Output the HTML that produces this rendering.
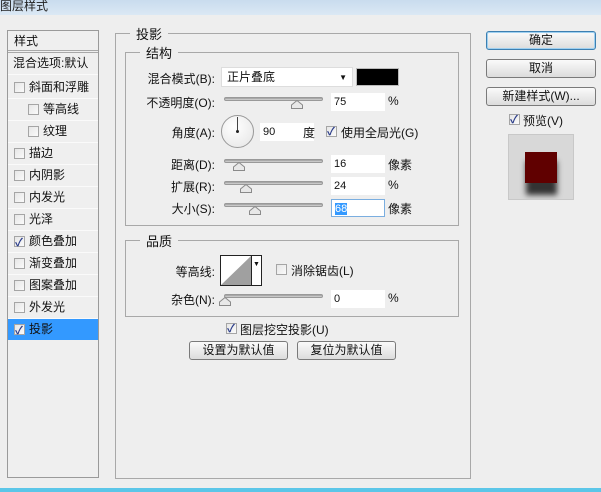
<!DOCTYPE html>
<html><head><meta charset="utf-8"><style>
*{box-sizing:border-box;margin:0;padding:0}
body{width:601px;height:492px;background:#eeeeee;font-family:"Liberation Sans","Noto Sans CJK SC",sans-serif;font-size:12px;color:#111;position:relative;overflow:hidden}
.a{position:absolute;white-space:nowrap}
.title{left:0;top:0;width:601px;height:15px;background:linear-gradient(#c9dcee,#dbe8f4);}
.title span{position:absolute;left:0;top:-3px;font-size:12px;color:#222}
.list{left:7px;top:30px;width:92px;height:448px;border:1px solid #9a9a9a;background:#efefef}
.row{position:absolute;left:0;width:90px;height:22px;border-bottom:1px solid #fafafa;line-height:21px}
.cb{position:absolute;width:11px;height:11px;border:1px solid #a5a5a5;background:linear-gradient(135deg,#e6e6e6,#fafafa);top:5px}
.cb.on::after{content:"✓";position:absolute;left:0;top:-4px;font-size:11px;color:#2a3c8a;font-weight:bold}
.fs{border:1px solid #a8a8a8;}
.lg{background:#eeeeee;padding:0 6px;font-size:13px}
.inp{background:#fff;height:18px;width:54px;padding-left:3px;line-height:18px;font-size:11px}
.track{width:99px;height:4px;border-radius:2px;background:linear-gradient(#9a9a9a,#d8d8d8);border:1px solid #999}
.btn{border:1px solid #7a7a7a;border-radius:3px;background:linear-gradient(#fafafa,#dcdcdc);text-align:center;line-height:16px;font-size:12px}
.lbl{text-align:right;width:100px}
.th{position:absolute;width:12px;height:9px}
</style></head><body>
<div class="a title"><span>图层样式</span></div>

<div class="a list">
 <div class="row" style="top:0;padding-left:6px;border-bottom:3px double #a8a8a8;height:22px">样式</div>
 <div class="row" style="top:22px;padding-left:5px;">混合选项:默认</div>
 <div class="row" style="top:46px"><div class="cb" style="left:6px"></div><span style="position:absolute;left:21px">斜面和浮雕</span></div>
 <div class="row" style="top:68px"><div class="cb" style="left:20px"></div><span style="position:absolute;left:35px">等高线</span></div>
 <div class="row" style="top:90px"><div class="cb" style="left:20px"></div><span style="position:absolute;left:35px">纹理</span></div>
 <div class="row" style="top:112px"><div class="cb" style="left:6px"></div><span style="position:absolute;left:21px">描边</span></div>
 <div class="row" style="top:134px"><div class="cb" style="left:6px"></div><span style="position:absolute;left:21px">内阴影</span></div>
 <div class="row" style="top:156px"><div class="cb" style="left:6px"></div><span style="position:absolute;left:21px">内发光</span></div>
 <div class="row" style="top:178px"><div class="cb" style="left:6px"></div><span style="position:absolute;left:21px">光泽</span></div>
 <div class="row" style="top:200px"><div class="cb on" style="left:6px"></div><span style="position:absolute;left:21px">颜色叠加</span></div>
 <div class="row" style="top:222px"><div class="cb" style="left:6px"></div><span style="position:absolute;left:21px">渐变叠加</span></div>
 <div class="row" style="top:244px"><div class="cb" style="left:6px"></div><span style="position:absolute;left:21px">图案叠加</span></div>
 <div class="row" style="top:266px"><div class="cb" style="left:6px"></div><span style="position:absolute;left:21px">外发光</span></div>
 <div class="row" style="top:288px;background:#3399ff;border:none;height:21px"><div class="cb on" style="left:6px"></div><span style="position:absolute;left:21px">投影</span></div>
</div>

<div class="a fs" style="left:115px;top:33px;width:356px;height:446px"></div>
<div class="a lg" style="left:130px;top:24px">投影</div>
<div class="a fs" style="left:125px;top:52px;width:334px;height:174px"></div>
<div class="a lg" style="left:140px;top:43px">结构</div>

<div class="a lbl" style="left:115px;top:70px">混合模式(B):</div>
<div class="a" style="left:221px;top:67px;width:132px;height:20px;background:#fff;border:1px solid #ddd;padding-left:5px;line-height:19px">正片叠底<span style="position:absolute;right:5px;top:0;font-size:8px">▼</span></div>
<div class="a" style="left:356px;top:68px;width:43px;height:18px;background:#000;border:1px solid #bbb"></div>

<div class="a lbl" style="left:115px;top:94px">不透明度(O):</div>
<div class="a track" style="left:224px;top:97px"></div>
<svg class="th" style="left:291px;top:100px" viewBox="0 0 12 9"><polygon points="6,0.5 11.5,5 11.5,8.5 0.5,8.5 0.5,5" fill="#e8e8e8" stroke="#8a8a8a"/></svg>
<div class="a inp" style="left:331px;top:93px">75</div><div class="a" style="left:388px;top:94px">%</div>

<div class="a lbl" style="left:115px;top:124px">角度(A):</div>
<div class="a" style="left:221px;top:115px;width:33px;height:33px;border-radius:50%;border:1px solid #999;background:radial-gradient(circle at 40% 35%,#fff,#e4e4e4)"></div>
<div class="a" style="left:237px;top:117px;width:1px;height:14px;background:#444"></div>
<div class="a" style="left:236px;top:130px;width:3px;height:3px;background:#222;border-radius:50%"></div>
<div class="a inp" style="left:260px;top:123px">90</div><div class="a" style="left:303px;top:124px">度</div>
<div class="a cb on" style="left:326px;top:126px"></div><div class="a" style="left:341px;top:124px">使用全局光(G)</div>

<div class="a lbl" style="left:115px;top:156px">距离(D):</div>
<div class="a track" style="left:224px;top:159px"></div>
<svg class="th" style="left:233px;top:162px" viewBox="0 0 12 9"><polygon points="6,0.5 11.5,5 11.5,8.5 0.5,8.5 0.5,5" fill="#e8e8e8" stroke="#8a8a8a"/></svg>
<div class="a inp" style="left:331px;top:155px">16</div><div class="a" style="left:388px;top:156px">像素</div>

<div class="a lbl" style="left:115px;top:178px">扩展(R):</div>
<div class="a track" style="left:224px;top:181px"></div>
<svg class="th" style="left:240px;top:184px" viewBox="0 0 12 9"><polygon points="6,0.5 11.5,5 11.5,8.5 0.5,8.5 0.5,5" fill="#e8e8e8" stroke="#8a8a8a"/></svg>
<div class="a inp" style="left:331px;top:177px">24</div><div class="a" style="left:388px;top:178px">%</div>

<div class="a lbl" style="left:115px;top:200px">大小(S):</div>
<div class="a track" style="left:224px;top:203px"></div>
<svg class="th" style="left:249px;top:206px" viewBox="0 0 12 9"><polygon points="6,0.5 11.5,5 11.5,8.5 0.5,8.5 0.5,5" fill="#e8e8e8" stroke="#8a8a8a"/></svg>
<div class="a inp" style="left:331px;top:199px;border:1px solid #7aaee0"><span style="background:#3399ff;color:#fff">68</span></div><div class="a" style="left:388px;top:200px">像素</div>

<div class="a fs" style="left:125px;top:240px;width:334px;height:77px"></div>
<div class="a lg" style="left:140px;top:231px">品质</div>
<div class="a lbl" style="left:115px;top:263px">等高线:</div>
<div class="a" style="left:220px;top:255px;width:42px;height:31px;border:1px solid #222;background:#fff">
 <svg width="30" height="29" style="position:absolute;left:0;top:0"><polygon points="0,29 30,0 30,29" fill="#a0a0a0"/></svg>
 <div style="position:absolute;left:30px;top:0;width:1px;height:29px;background:#222"></div>
 <span style="position:absolute;left:32px;top:5px;font-size:7px">▼</span>
</div>
<div class="a cb" style="left:276px;top:264px"></div><div class="a" style="left:291px;top:262px">消除锯齿(L)</div>

<div class="a lbl" style="left:115px;top:291px">杂色(N):</div>
<div class="a track" style="left:224px;top:294px"></div>
<svg class="th" style="left:219px;top:297px" viewBox="0 0 12 9"><polygon points="6,0.5 11.5,5 11.5,8.5 0.5,8.5 0.5,5" fill="#e8e8e8" stroke="#8a8a8a"/></svg>
<div class="a inp" style="left:331px;top:290px">0</div><div class="a" style="left:388px;top:291px">%</div>

<div class="a cb on" style="left:226px;top:323px"></div><div class="a" style="left:240px;top:321px">图层挖空投影(U)</div>
<div class="a btn" style="left:189px;top:341px;width:99px;height:19px">设置为默认值</div>
<div class="a btn" style="left:297px;top:341px;width:99px;height:19px">复位为默认值</div>

<div class="a btn" style="left:486px;top:31px;width:110px;height:19px;border-color:#3c7fb1;box-shadow:0 0 0 1px #9fd0f0 inset">确定</div>
<div class="a btn" style="left:486px;top:59px;width:110px;height:19px">取消</div>
<div class="a btn" style="left:486px;top:87px;width:110px;height:19px">新建样式(W)...</div>
<div class="a cb on" style="left:509px;top:114px"></div><div class="a" style="left:523px;top:112px">预览(V)</div>
<div class="a" style="left:508px;top:134px;width:66px;height:66px;background:#d8d8d8;border:1px solid #c8c8c8;overflow:hidden">
 <div style="position:absolute;left:17px;top:26px;width:31px;height:34px;background:#333;filter:blur(3px)"></div>
 <div style="position:absolute;left:16px;top:17px;width:32px;height:31px;background:#600000"></div>
</div>

<div class="a" style="left:0;top:488px;width:601px;height:4px;background:#5bc6e8"></div>
</body></html>
